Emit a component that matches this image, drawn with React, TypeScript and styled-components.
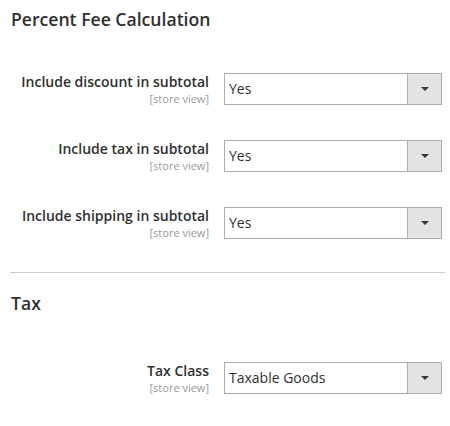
import React from "react";
import styled, { createGlobalStyle } from "styled-components";

const Global = createGlobalStyle`
  html, body { margin: 0; padding: 0; background: #fff; }
  body { font-family: "Open Sans", "Noto Sans", sans-serif; color: #303030; }
`;

const Page = styled.div`
  padding: 0 5px 0 10px;
  width: 450px;
  box-sizing: border-box;
`;

const Section = styled.section<{ $divider?: boolean }>`
  border-top: ${(p) => (p.$divider ? "1px solid #cccccc" : "none")};
  padding-bottom: 33px;
`;

const Title = styled.h2<{ $top: number; $gap: number }>`
  margin: 0 0 ${(p) => p.$gap}px 0;
  padding: ${(p) => p.$top}px 0 0 1px;
  font-size: 17.6px;
  font-weight: 600;
  line-height: 22px;
  color: #303030;
`;

const Rows = styled.div`
  display: flex;
  flex-direction: column;
  gap: 35px;
`;

const Row = styled.div`
  display: flex;
  align-items: flex-start;
  gap: 15px;
`;

const LabelCol = styled.div`
  width: 199px;
  text-align: right;
`;

const LabelText = styled.div`
  font-size: 14px;
  font-weight: 600;
  line-height: 17px;
  color: #303030;
`;

const Scope = styled.div`
  margin-top: 3px;
  font-size: 11px;
  line-height: 12px;
  color: #999999;
`;

const Select = styled.div`
  width: 218px;
  height: 32px;
  box-sizing: border-box;
  border: 1px solid #adadad;
  display: flex;
  align-items: stretch;
  background: #fff;
`;

const Value = styled.div`
  flex: 1;
  padding-left: 4px;
  font-size: 14px;
  line-height: 30px;
  color: #303030;
`;

const ArrowBox = styled.div`
  width: 33px;
  border-left: 1px solid #adadad;
  background: #e3e3e3;
  display: flex;
  align-items: center;
  justify-content: center;
`;

const Arrow = styled.span`
  width: 0;
  height: 0;
  border-left: 4px solid transparent;
  border-right: 4px solid transparent;
  border-top: 4px solid #41362f;
`;

const Field = ({ label, value }: { label: string; value: string }) => (
  <Row>
    <LabelCol>
      <LabelText>{label}</LabelText>
      <Scope>[store view]</Scope>
    </LabelCol>
    <Select>
      <Value>{value}</Value>
      <ArrowBox>
        <Arrow />
      </ArrowBox>
    </Select>
  </Row>
);

export default function App() {
  return (
    <Page>
      <Global />
      <Section>
        <Title $top={8} $gap={43}>Percent Fee Calculation</Title>
        <Rows>
          <Field label="Include discount in subtotal" value="Yes" />
          <Field label="Include tax in subtotal" value="Yes" />
          <Field label="Include shipping in subtotal" value="Yes" />
        </Rows>
      </Section>
      <Section $divider>
        <Title $top={19} $gap={48}>Tax</Title>
        <Rows>
          <Field label="Tax Class" value="Taxable Goods" />
        </Rows>
      </Section>
    </Page>
  );
}
